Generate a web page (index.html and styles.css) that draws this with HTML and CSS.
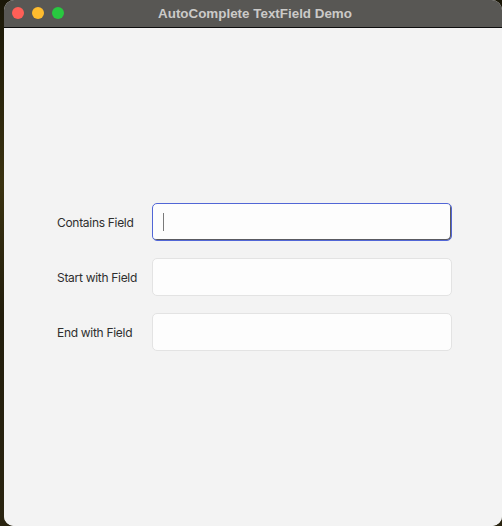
FILE: index.html
```html
<!DOCTYPE html>
<html>
<head>
<meta charset="utf-8">
<title>AutoComplete TextField Demo</title>
<link rel="stylesheet" href="styles.css">
</head>
<body>
<div class="desktop">
  <div class="window">
    <div class="titlebar">
      <div class="lights">
        <span class="light red"></span>
        <span class="light yellow"></span>
        <span class="light green"></span>
      </div>
      <div class="title">AutoComplete TextField Demo</div>
    </div>
    <div class="content">
      <div class="form">
        <label class="label">Contains Field</label>
        <div class="field focused"><span class="caret"></span></div>
        <label class="label">Start with Field</label>
        <div class="field"></div>
        <label class="label">End with Field</label>
        <div class="field"></div>
      </div>
    </div>
  </div>
</div>
</body>
</html>
```

FILE: styles.css
```css
html, body {
  margin: 0;
  padding: 0;
  width: 502px;
  height: 526px;
  overflow: hidden;
  background: #1d1a0e;
}
.desktop {
  width: 502px;
  height: 526px;
  padding-left: 4px;
  box-sizing: border-box;
  background: linear-gradient(180deg, #1a1708 0%, #3a3210 35%, #221d0c 60%, #2a2410 100%);
}
.window {
  width: 498px;
  height: 526px;
  border-radius: 10px;
  overflow: hidden;
  display: flex;
  flex-direction: column;
  background: #f3f3f3;
}
.titlebar {
  height: 27px;
  flex: none;
  background: #585754;
  border-bottom: 1px solid #0e0e0e;
  position: relative;
  display: flex;
  align-items: center;
  justify-content: center;
}
.lights {
  position: absolute;
  left: 8px;
  top: 7px;
  display: flex;
  gap: 8px;
}
.light {
  width: 12px;
  height: 12px;
  border-radius: 50%;
  display: block;
}
.red { background: #fe5f57; }
.yellow { background: #febc2e; }
.green { background: #28c840; }
.title {
  font-family: "Liberation Sans", Arial, sans-serif;
  font-weight: bold;
  font-size: 13.4px;
  color: #cbcac8;
  margin-left: 4px;
}
.content {
  flex: 1;
  background: #f3f3f3;
  padding-top: 175px;
  padding-left: 53px;
}
.form {
  display: grid;
  grid-template-columns: 95px 300px;
  grid-auto-rows: 38px;
  row-gap: 17px;
  align-items: center;
}
.label {
  font-family: Inter, "Liberation Sans", sans-serif;
  font-size: 12px;
  color: #2e2e2e;
  letter-spacing: -0.3px;
}
.field {
  height: 38px;
  box-sizing: border-box;
  border: 1px solid #e3e3e3;
  border-radius: 5px;
  background: #fdfdfd;
  display: flex;
  align-items: center;
}
.field.focused {
  border-color: #5166d6;
  box-shadow: inset -1px -1px 0 #5a5a60;
  background: #fdfdfd;
}
.caret {
  width: 1px;
  height: 18px;
  background: #7a7a7a;
  margin-left: 10px;
}
```
